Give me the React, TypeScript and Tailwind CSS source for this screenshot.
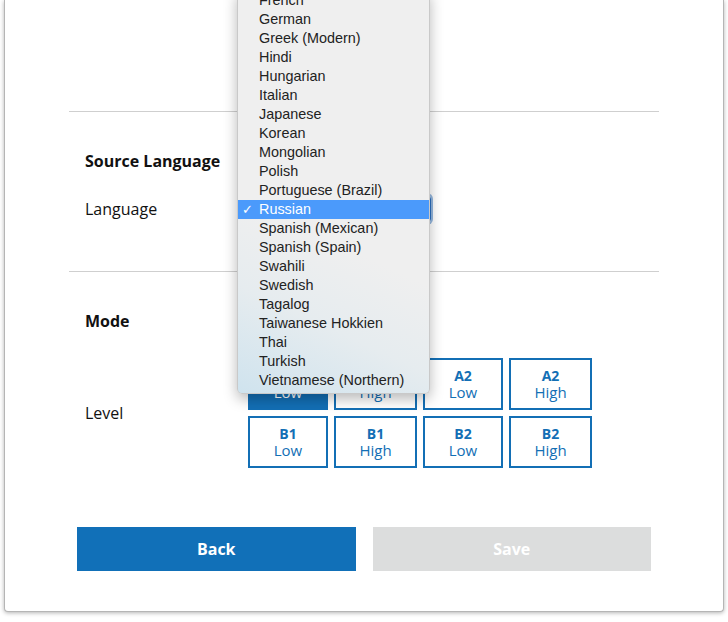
const languages = [
  'French',
  'German',
  'Greek (Modern)',
  'Hindi',
  'Hungarian',
  'Italian',
  'Japanese',
  'Korean',
  'Mongolian',
  'Polish',
  'Portuguese (Brazil)',
  'Russian',
  'Spanish (Mexican)',
  'Spanish (Spain)',
  'Swahili',
  'Swedish',
  'Tagalog',
  'Taiwanese Hokkien',
  'Thai',
  'Turkish',
  'Vietnamese (Northern)',
];

const levels = [
  { code: 'A1', band: 'Low', width: 'w-[80px]' },
  { code: 'A1', band: 'High', width: 'w-[83px]' },
  { code: 'A2', band: 'Low', width: 'w-[80px]' },
  { code: 'A2', band: 'High', width: 'w-[83px]' },
  { code: 'B1', band: 'Low', width: 'w-[80px]' },
  { code: 'B1', band: 'High', width: 'w-[83px]' },
  { code: 'B2', band: 'Low', width: 'w-[80px]' },
  { code: 'B2', band: 'High', width: 'w-[83px]' },
];

function LanguageMenu({ selected }: { selected: string }) {
  return (
    <ul className="absolute left-[237px] top-[-9px] z-10 w-[193px] rounded-b-[5px] border border-t-0 border-[#c9c9c9] bg-[linear-gradient(25deg,#cfe3ee_0%,#e6ecef_22%,#efefef_40%)] pb-[3px] font-['Liberation_Sans',Arial,sans-serif] text-[14.4px] text-[#222] shadow-[0_5px_14px_rgba(0,0,0,0.28)]">
      {languages.map((name) => {
        const active = name === selected;
        return (
          <li
            key={name}
            className={
              'relative flex h-[19px] items-center pl-[21px] leading-[19px] ' +
              (active ? 'bg-[#4b9afb] text-white' : '')
            }
          >
            {active && <span className="absolute left-[4px] text-[13px]">✓</span>}
            {name}
          </li>
        );
      })}
    </ul>
  );
}

function LevelButton({ code, band, width, active }: { code: string; band: string; width: string; active: boolean }) {
  return (
    <button
      type="button"
      className={
        'flex h-[52px] flex-col items-center justify-center border-2 border-[#136fb5] leading-[17px] ' +
        width +
        (active ? ' bg-[#136fb5] text-white' : ' bg-white text-[#136fb5]')
      }
    >
      <span className="text-[14px] font-bold">{code}</span>
      <span className="text-[15px]">{band}</span>
    </button>
  );
}

export default function App() {
  return (
    <div className="relative min-h-[622px] bg-white font-['Open_Sans',sans-serif] text-[#111]">
      <LanguageMenu selected="Russian" />

      <div className="mx-[4px] rounded-b-[4px] border border-t-0 border-[#b5b5b5] bg-white px-[64px] pb-[40px] shadow-[0_1px_4px_rgba(0,0,0,0.3)]">
        <div className="h-[112px] border-b border-[#cfcfcf]" />

        <section className="border-b border-[#cfcfcf] pb-[48px] pl-4 pt-[38px]">
          <h2 className="text-[16px] font-bold leading-[22px]">Source Language</h2>
          <div className="mt-[23px] flex items-center">
            <span className="w-[163px] text-[16px] leading-[22px]">Language</span>
            <div className="h-[28px] w-[183px] rounded-[4px] border border-[#2a6fc0] shadow-[0_0_0_2px_rgba(42,111,192,0.5)]" />
          </div>
        </section>

        <section className="pl-4 pt-[38px]">
          <h2 className="text-[16px] font-bold leading-[22px]">Mode</h2>
          <div className="mt-[26px] flex items-center">
            <span className="w-[163px] text-[16px] leading-[22px]">Level</span>
            <div className="flex flex-col gap-[6px]">
              <div className="flex gap-[6px]">
                {levels.slice(0, 4).map((l, i) => (
                  <LevelButton key={l.code + l.band} {...l} active={i === 0} />
                ))}
              </div>
              <div className="flex gap-[6px]">
                {levels.slice(4).map((l) => (
                  <LevelButton key={l.code + l.band} {...l} active={false} />
                ))}
              </div>
            </div>
          </div>
        </section>

        <div className="mt-[59px] flex gap-[17px] px-2">
          <button type="button" className="h-[44px] flex-1 bg-[#1170b8] text-[16px] font-bold text-white">
            Back
          </button>
          <button type="button" disabled className="h-[44px] flex-1 bg-[#dcdddd] text-[16px] font-bold text-white">
            Save
          </button>
        </div>
      </div>
    </div>
  );
}
